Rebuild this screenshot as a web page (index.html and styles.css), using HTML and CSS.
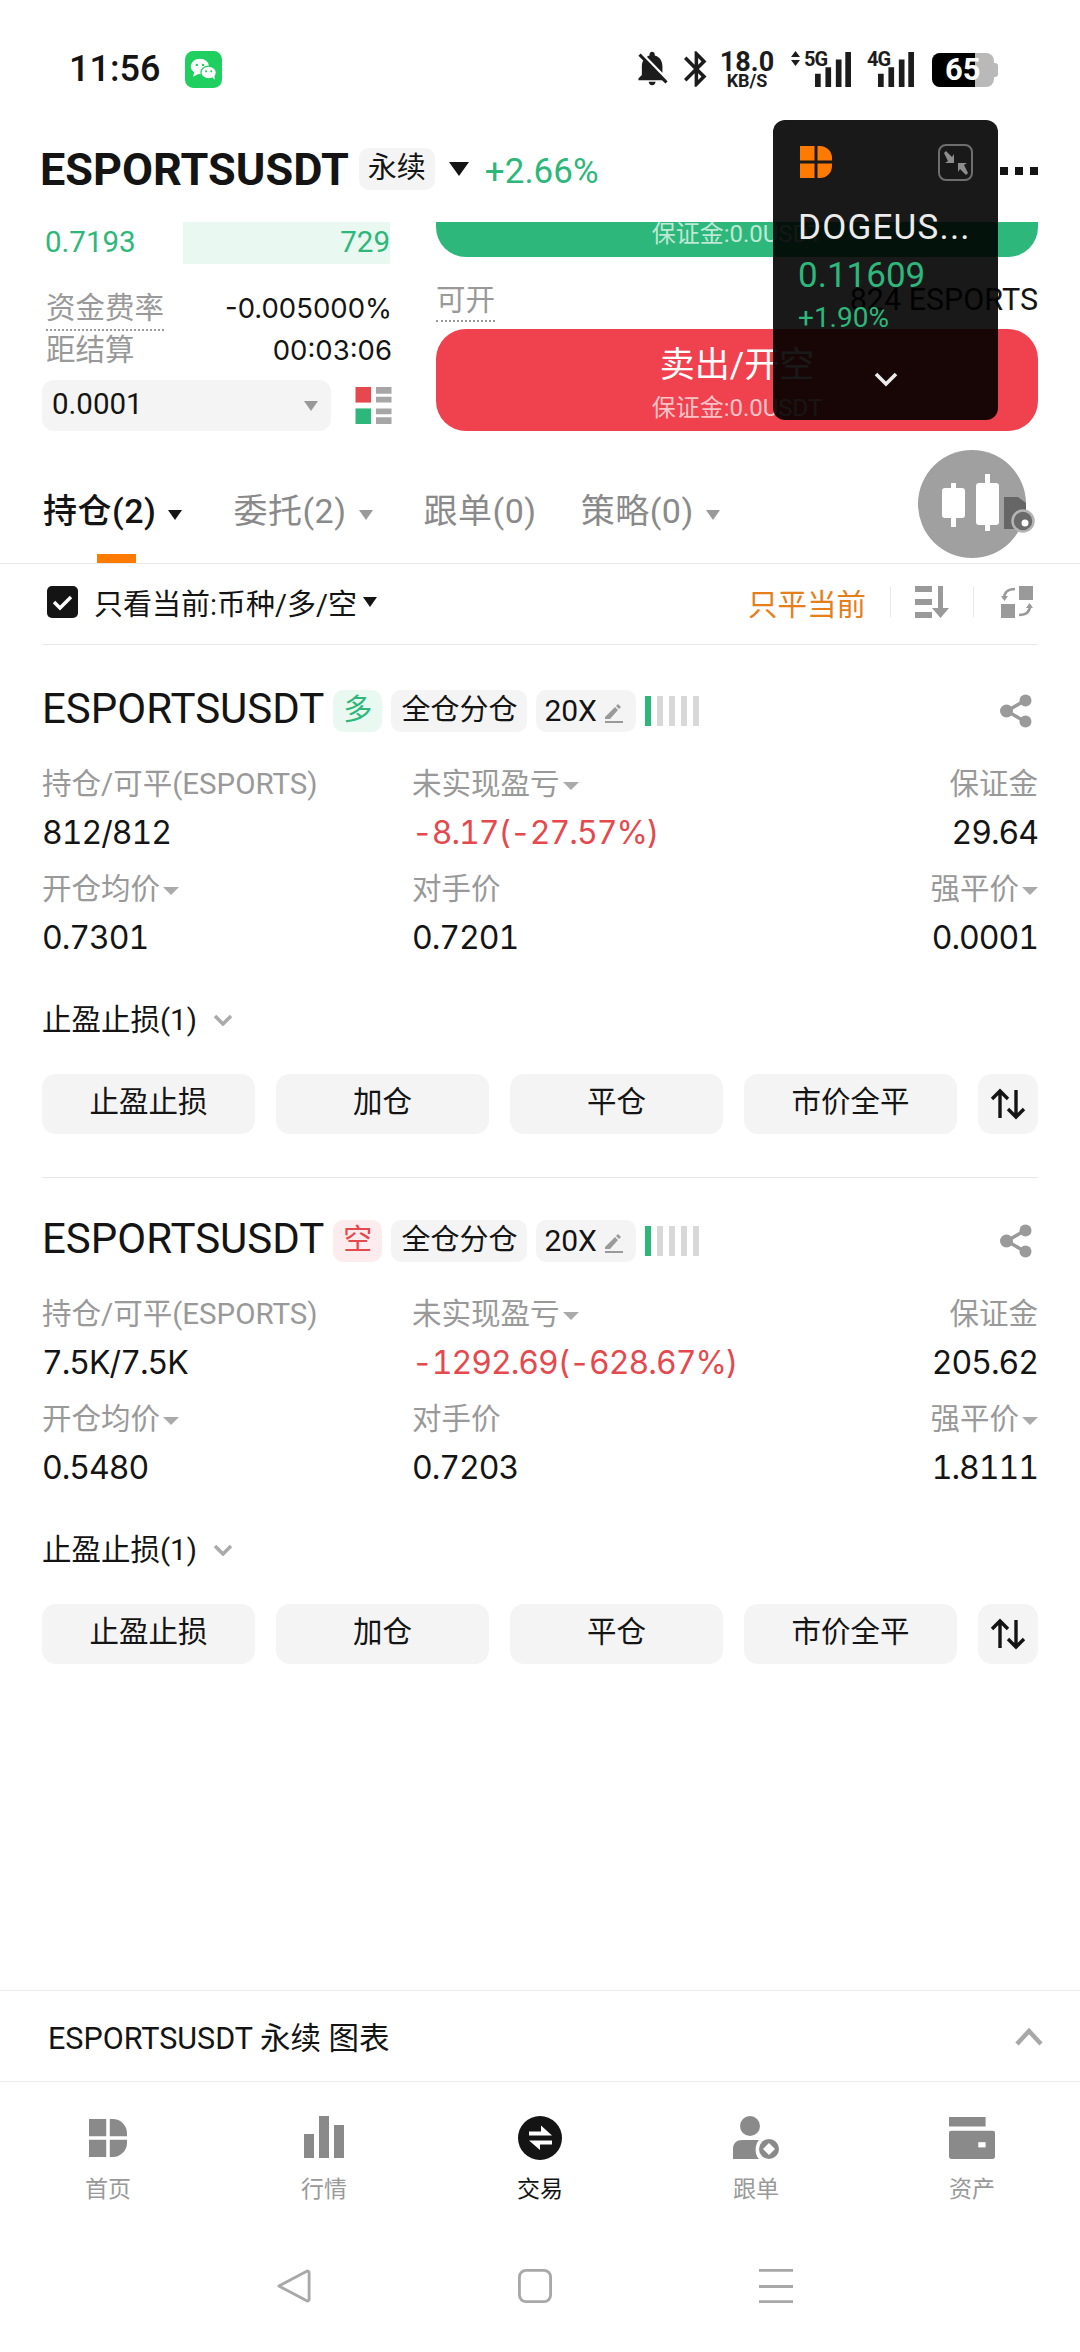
FILE: index.html
```html
<!DOCTYPE html>
<html lang="zh-CN">
<head>
    <meta charset="UTF-8">
    <meta name="viewport" content="width=device-width, initial-scale=1.0">
    <title>ESPORTSUSDT 永续</title>
    <link rel="stylesheet" href="styles.css">
</head>
<body>
    <svg class="defs" width="0" height="0">
        <symbol id="logo" viewBox="0 0 32 32">
            <path d="M0 0h14.500v14.500H0zM0 17.500h14.500V32H0zM17.500 0H20a12 12 0 0 1 12 12v2.500H17.500zM17.500 17.500H32V20a12 12 0 0 1-12 12h-2.500z"/>
        </symbol>
        <symbol id="pencil" viewBox="0 0 20 20">
            <path d="M1 13 11 3l3 3-8 9H1zM12 2l2-2 3 3-2 2zM1 17h18v2H1z"/>
        </symbol>
        <symbol id="share" viewBox="0 0 32 34">
            <path d="M24 7 7 17l17 10" fill="none" stroke="currentColor" stroke-width="3.500"/>
            <circle cx="25.500" cy="6.500" r="6"/>
            <circle cx="6.500" cy="17" r="6.500"/>
            <circle cx="25.500" cy="27.500" r="6"/>
        </symbol>
        <symbol id="updown" viewBox="0 0 36 32">
            <path d="M10 30V3M2 11l8-8 8 8M26 2v27M18 21l8 8 8-8" fill="none" stroke="currentColor" stroke-width="3.400"/>
        </symbol>
    </svg>

    <div class="page">
        <div class="status-bar">
            <span class="clock">11:56</span>
            <svg class="wechat" viewBox="0 0 36 36">
                <rect width="36" height="36" rx="8" fill="#1fcf5f"/>
                <ellipse cx="14.500" cy="15" rx="9" ry="7.500" fill="#fff"/>
                <path d="M9 20l-1 5 6-3z" fill="#fff"/>
                <ellipse cx="23" cy="21" rx="7.500" ry="6.200" fill="#fff" stroke="#1fcf5f" stroke-width="1.200"/>
                <path d="M26 25l3 3-.5-5z" fill="#fff"/>
                <circle cx="11.500" cy="13.500" r="1.200" fill="#1fcf5f"/>
                <circle cx="17.500" cy="13.500" r="1.200" fill="#1fcf5f"/>
                <circle cx="20.500" cy="19.800" r="1" fill="#1fcf5f"/>
                <circle cx="25.500" cy="19.800" r="1" fill="#1fcf5f"/>
            </svg>
            <div class="status-right">
                <svg class="st-bell" viewBox="3 2 19 21"><path d="M20 18.69L7.84 6.14 5.27 3.49 4 4.76l2.8 2.8v.01c-.52.99-.8 2.16-.8 3.42v5l-2 2v1h13.73l2 2L21 19.72l-1-1.03zM12 22c1.11 0 2-.89 2-2h-4c0 1.11.89 2 2 2zm6-7.32V11c0-3.08-1.64-5.64-4.5-6.32V4c0-.83-.67-1.5-1.5-1.5s-1.5.67-1.5 1.5v.68c-.15.03-.29.08-.42.12-.1.03-.2.07-.3.11h-.01c-.2.08-.4.18-.59.28-.1.05-.2.12-.3.18L18 14.68z"/></svg>
                <svg class="st-bt" viewBox="5 2 13 20"><path d="M17.71 7.71L12 2h-1v7.59L6.41 5 5 6.41 10.59 12 5 17.59 6.41 19 11 14.41V22h1l5.71-5.71-4.3-4.29 4.3-4.29zM13 5.83l1.88 1.88L13 9.59V5.83zm1.88 10.46L13 18.17v-3.76l1.88 1.88z"/></svg>
                <div class="st-speed"><span class="st-speed-num">18.0</span><span class="st-speed-unit">KB/S</span></div>
                <div class="st-signal st-signal-5g">
                    <svg class="st-arrows" viewBox="0 0 9 15"><path d="M4.500 0 9 6H0zM0 9h9l-4.500 6z"/></svg>
                    <span class="st-net">5G</span>
                    <svg class="st-bars" viewBox="0 0 38 37"><path d="M0 23h6v14H0zM11 16h6v21h-6zM22 8h6v29h-6zM32 0h6v37h-6z"/></svg>
                </div>
                <div class="st-signal st-signal-4g">
                    <span class="st-net">4G</span>
                    <svg class="st-bars" viewBox="0 0 38 37"><path d="M0 23h6v14H0zM11 16h6v21h-6zM22 8h6v29h-6zM32 0h6v37h-6z"/></svg>
                </div>
                <div class="st-battery"><span class="st-battery-fill"></span><span class="st-battery-text">65</span></div>
            </div>
        </div>

        <div class="title-bar">
            <span class="symbol">ESPORTSUSDT</span>
            <span class="perp-tag">永续</span>
            <span class="caret caret-title"></span>
            <span class="change">+2.66%</span>
            <div class="more"><i></i><i></i><i></i></div>
        </div>

        <div class="trade-panel">
            <div class="book-col">
                <div class="book-row">
                    <span class="book-price">0.7193</span>
                    <span class="book-qty">729</span>
                </div>
                <div class="info-row info-row-first">
                    <span class="dash-label">资金费率</span>
                    <span class="num">-0.005000%</span>
                </div>
                <div class="info-row">
                    <span class="muted">距结算</span>
                    <span class="num">00:03:06</span>
                </div>
                <div class="select-row">
                    <div class="tick-select"><span class="tick-value">0.0001</span><span class="caret caret-gray"></span></div>
                    <svg class="depth-icon" viewBox="0 0 37 38">
                        <path fill="#e5484d" d="M0 0h16v16H0z"/>
                        <path fill="#2db77b" d="M0 22h16v16H0z"/>
                        <path fill="#a6a6a6" d="M21 0h16v7H21zM21 10h16v6H21zM21 22h16v6H21zM21 31h16v7H21z"/>
                    </svg>
                </div>
            </div>
            <div class="order-col">
                <div class="btn-buy"><span class="margin-note">保证金:0.0USDT</span></div>
                <div class="avail-row">
                    <span class="dash-label">可开</span>
                    <span>824 ESPORTS</span>
                </div>
                <div class="btn-sell">
                    <span class="btn-sell-title">卖出/开空</span>
                    <span class="margin-note">保证金:0.0USDT</span>
                </div>
            </div>
        </div>

        <div class="tabs">
            <div class="tab tab-active">持仓(2)<span class="caret caret-tab"></span></div>
            <div class="tab">委托(2)<span class="caret caret-tab caret-gray"></span></div>
            <div class="tab">跟单(0)</div>
            <div class="tab tab-last">策略(0)<span class="caret caret-tab caret-gray"></span></div>
        </div>

        <div class="filter-row">
            <svg class="checkbox" viewBox="0 0 31 32">
                <rect width="31" height="32" rx="5" fill="#141414"/>
                <path d="M7 16l6 6 11-11" fill="none" stroke="#fff" stroke-width="3.400"/>
            </svg>
            <span class="filter-text">只看当前:币种/多/空</span>
            <span class="caret caret-tab"></span>
            <span class="close-current">只平当前</span>
            <span class="vsep"></span>
            <svg class="filter-icon" viewBox="0 0 34 32">
                <path d="M0 0h17v6H0zM0 13h17v6H0zM0 26h17v6H0zM23 0h5v22h6l-8.500 10L17 22h6z"/>
            </svg>
            <span class="vsep"></span>
            <svg class="filter-icon filter-icon-last" viewBox="0 0 32 32">
                <path d="M18 0h14v14H18zM0 18h14v14H0z"/>
                <path d="M14 3C7 3 3 6 3 13M18 29c7 0 11-3 11-10" fill="none" stroke="currentColor" stroke-width="2.600"/>
                <path d="M0 10h7l-3.500 5zM25 22h7l-3.500-5z"/>
            </svg>
        </div>

        <div class="positions">
            <div class="position position-split">
                <div class="pos-head">
                    <span class="pos-symbol">ESPORTSUSDT</span>
                    <span class="pos-tag tag-long">多</span>
                    <span class="pos-tag">全仓分仓</span>
                    <span class="pos-tag pos-tag-lev">20X<svg class="pencil"><use href="#pencil"/></svg></span>
                    <span class="risk"><i class="risk-on"></i><i></i><i></i><i></i><i></i></span>
                    <svg class="share"><use href="#share"/></svg>
                </div>
                <div class="pos-grid">
                    <div class="stat">
                        <span class="stat-label">持仓/可平(ESPORTS)</span>
                        <span class="stat-value">812/812</span>
                    </div>
                    <div class="stat">
                        <span class="stat-label">未实现盈亏<span class="caret caret-small"></span></span>
                        <span class="stat-value red">-8.17(-27.57%)</span>
                    </div>
                    <div class="stat stat-right">
                        <span class="stat-label">保证金</span>
                        <span class="stat-value">29.64</span>
                    </div>
                    <div class="stat">
                        <span class="stat-label">开仓均价<span class="caret caret-small"></span></span>
                        <span class="stat-value">0.7301</span>
                    </div>
                    <div class="stat">
                        <span class="stat-label">对手价</span>
                        <span class="stat-value">0.7201</span>
                    </div>
                    <div class="stat stat-right">
                        <span class="stat-label">强平价<span class="caret caret-small"></span></span>
                        <span class="stat-value">0.0001</span>
                    </div>
                </div>
                <div class="stop-row">止盈止损(1)<svg class="stop-chevron" viewBox="0 0 20 12"><path d="M2 2l8 8 8-8" fill="none" stroke="currentColor" stroke-width="3.500"/></svg></div>
                <div class="pos-actions">
                    <span class="action">止盈止损</span>
                    <span class="action">加仓</span>
                    <span class="action">平仓</span>
                    <span class="action">市价全平</span>
                    <span class="action action-icon"><svg class="updown"><use href="#updown"/></svg></span>
                </div>
            </div>

            <div class="position">
                <div class="pos-head">
                    <span class="pos-symbol">ESPORTSUSDT</span>
                    <span class="pos-tag tag-short">空</span>
                    <span class="pos-tag">全仓分仓</span>
                    <span class="pos-tag pos-tag-lev">20X<svg class="pencil"><use href="#pencil"/></svg></span>
                    <span class="risk"><i class="risk-on"></i><i></i><i></i><i></i><i></i></span>
                    <svg class="share"><use href="#share"/></svg>
                </div>
                <div class="pos-grid">
                    <div class="stat">
                        <span class="stat-label">持仓/可平(ESPORTS)</span>
                        <span class="stat-value">7.5K/7.5K</span>
                    </div>
                    <div class="stat">
                        <span class="stat-label">未实现盈亏<span class="caret caret-small"></span></span>
                        <span class="stat-value red">-1292.69(-628.67%)</span>
                    </div>
                    <div class="stat stat-right">
                        <span class="stat-label">保证金</span>
                        <span class="stat-value">205.62</span>
                    </div>
                    <div class="stat">
                        <span class="stat-label">开仓均价<span class="caret caret-small"></span></span>
                        <span class="stat-value">0.5480</span>
                    </div>
                    <div class="stat">
                        <span class="stat-label">对手价</span>
                        <span class="stat-value">0.7203</span>
                    </div>
                    <div class="stat stat-right">
                        <span class="stat-label">强平价<span class="caret caret-small"></span></span>
                        <span class="stat-value">1.8111</span>
                    </div>
                </div>
                <div class="stop-row">止盈止损(1)<svg class="stop-chevron" viewBox="0 0 20 12"><path d="M2 2l8 8 8-8" fill="none" stroke="currentColor" stroke-width="3.500"/></svg></div>
                <div class="pos-actions">
                    <span class="action">止盈止损</span>
                    <span class="action">加仓</span>
                    <span class="action">平仓</span>
                    <span class="action">市价全平</span>
                    <span class="action action-icon"><svg class="updown"><use href="#updown"/></svg></span>
                </div>
            </div>
        </div>

        <div class="chart-bar">
            <span>ESPORTSUSDT 永续 图表</span>
            <svg class="chart-chevron" viewBox="0 0 28 19"><path d="M2 17 14 4l12 13" fill="none" stroke="currentColor" stroke-width="4.500"/></svg>
        </div>

        <nav class="bottom-nav">
            <div class="nav-item">
                <svg class="nav-icon nav-logo"><use href="#logo"/></svg>
                <span>首页</span>
            </div>
            <div class="nav-item">
                <svg class="nav-icon" viewBox="0 0 44 44"><path d="M2 18h10v24H2zM17 0h10v42H17zM32 9h10v33H32z"/></svg>
                <span>行情</span>
            </div>
            <div class="nav-item nav-active">
                <svg class="nav-icon" viewBox="0 0 44 44">
                    <circle cx="22" cy="22" r="22"/>
                    <path d="M11 15.500h12V9.500L34 19.500H11zM11 24.500h23v4H22V34z" fill="#fff"/>
                </svg>
                <span>交易</span>
            </div>
            <div class="nav-item">
                <svg class="nav-icon" viewBox="0 0 46 44">
                    <circle cx="17" cy="10" r="10"/>
                    <path d="M0 43V33c0-6 4-9 9-9h17c-4 4-5 14 0 19z"/>
                    <circle cx="36" cy="33" r="10"/>
                    <path d="M36 27l6 6-6 6-6-6z" fill="#fff"/>
                </svg>
                <span>跟单</span>
            </div>
            <div class="nav-item">
                <svg class="nav-icon" viewBox="0 0 44 40">
                    <path d="M0 0h35v9H0z"/>
                    <path d="M2 13h40a2 2 0 0 1 2 2v23a2 2 0 0 1-2 2H2a2 2 0 0 1-2-2V15a2 2 0 0 1 2-2z"/>
                    <path d="M28 24h7v5h-7z" fill="#fff"/>
                </svg>
                <span>资产</span>
            </div>
        </nav>

        <div class="gesture-bar">
            <svg class="gesture" viewBox="0 0 36 36"><path d="M2 18 32 2c1 0 2 1 2 2v28c0 1-1 2-2 2z" fill="none" stroke="currentColor" stroke-width="3" stroke-linejoin="round"/></svg>
            <svg class="gesture" viewBox="0 0 36 36"><rect x="1.500" y="1.500" width="33" height="33" rx="7" fill="none" stroke="currentColor" stroke-width="3"/></svg>
            <svg class="gesture" viewBox="0 0 36 36"><path d="M0 0h36v3H0zM0 17h36v3H0zM0 33h36v3H0z"/></svg>
        </div>

        <!-- floating widgets over the page -->
        <div class="float-ticker">
            <div class="float-top">
                <svg class="float-logo"><use href="#logo"/></svg>
                <span class="float-collapse">
                    <svg viewBox="0 0 24 24" width="24" height="24">
                        <path d="M0 2l2-2 6 6 2-3v9H1l3-2zM24 22l-2 2-6-6-2 3v-9h9l-3 2z" fill="#8d8d8d"/>
                    </svg>
                </span>
            </div>
            <div class="float-name">DOGEUS...</div>
            <div class="float-price">0.11609</div>
            <div class="float-change">+1.90%</div>
            <svg class="float-chevron" viewBox="0 0 24 15"><path d="M2 2l10 10L22 2" fill="none" stroke="currentColor" stroke-width="3.600"/></svg>
        </div>

        <div class="float-chart">
            <svg viewBox="0 0 108 108" width="108" height="108">
                <circle cx="54" cy="54" r="54" fill="#a0a0a0"/>
                <path fill="#fff" d="M33 33h5v5h6a3 3 0 0 1 3 3v24a3 3 0 0 1-3 3h-6v9h-5v-9h-6a3 3 0 0 1-3-3V41a3 3 0 0 1 3-3h6z"/>
                <path fill="#fff" d="M67 24h5v9h6a3 3 0 0 1 3 3v36a3 3 0 0 1-3 3h-6v6h-5v-6h-6a3 3 0 0 1-3-3V36a3 3 0 0 1 3-3h6z"/>
                <path fill="#666" d="M86 47h14l8 6v26H86z"/>
            </svg>
            <svg class="float-chart-badge" viewBox="0 0 24 24">
                <circle cx="12" cy="12" r="10.500" fill="#6a6a6a" stroke="#b4b4b4" stroke-width="2.500"/>
                <circle cx="14" cy="14" r="3.500" fill="#fff"/>
            </svg>
        </div>
    </div>
</body>
</html>
```

FILE: styles.css
```css
* {
    box-sizing: border-box;
}
body {
    margin: 0;
    background: #fff;
    color: #141414;
    font-family: Roboto, "Noto Sans CJK SC", sans-serif;
}
.defs {
    position: absolute;
}
.page {
    position: relative;
    width: 1080px;
    height: 2352px;
    display: flex;
    flex-direction: column;
    overflow: hidden;
}
.num {
    font-family: Inter, "Noto Sans CJK SC", sans-serif;
}

/* status bar */
.status-bar {
    height: 116px;
    padding: 50px 86px 0 69px;
    display: flex;
    align-items: flex-start;
}
.clock {
    font-size: 36px;
    font-weight: 500;
    line-height: 38px;
    width: 116px;
}
.wechat {
    width: 37px;
    height: 37px;
    margin-top: 1px;
}
.status-right {
    margin-left: auto;
    padding-top: 1px;
    display: flex;
    align-items: flex-start;
    color: #1c1c1c;
    fill: #1c1c1c;
}
.st-bell {
    width: 36px;
    height: 36px;
}
.st-bt {
    width: 23px;
    height: 36px;
    margin-left: 13px;
}
.st-speed {
    width: 56px;
    margin-left: 12px;
    display: flex;
    flex-direction: column;
    align-items: center;
    font-weight: 700;
}
.st-speed-num {
    font-size: 27px;
    line-height: 22px;
}
.st-speed-unit {
    font-size: 18px;
    line-height: 15px;
}
.st-signal {
    position: relative;
    height: 36px;
}
.st-signal-5g {
    width: 61px;
    margin-left: 16px;
}
.st-signal-4g {
    width: 48px;
    margin-left: 15px;
}
.st-arrows {
    position: absolute;
    left: 0;
    top: 0;
    width: 9px;
    height: 15px;
}
.st-net {
    position: absolute;
    top: -2px;
    font-size: 20px;
    line-height: 20px;
    font-weight: 700;
    letter-spacing: -1px;
}
.st-signal-5g .st-net {
    left: 13px;
}
.st-signal-4g .st-net {
    left: 0;
}
.st-bars {
    position: absolute;
    right: 0;
    bottom: 0;
    width: 38px;
    height: 35px;
}
.st-battery {
    position: relative;
    width: 62px;
    height: 34px;
    margin: 2px 0 0 17px;
    border-radius: 8px;
    background: #b9b9b9;
}
.st-battery::after {
    content: '';
    position: absolute;
    right: -4px;
    top: 10px;
    width: 4px;
    height: 14px;
    border-radius: 0 3px 3px 0;
    background: #b9b9b9;
}
.st-battery-fill {
    position: absolute;
    left: 0;
    top: 0;
    width: 43px;
    height: 34px;
    background: #000;
    border-radius: 8px 0 0 8px;
}
.st-battery-text {
    position: absolute;
    left: 13px;
    top: 0;
    color: #fff;
    font-size: 31px;
    line-height: 34px;
    font-weight: 700;
}

/* title */
.title-bar {
    height: 106px;
    padding: 0 42px 0 40px;
    display: flex;
    align-items: center;
}
.symbol {
    font-size: 45px;
    font-weight: 700;
}
.perp-tag {
    margin-left: 10px;
    width: 76px;
    height: 42px;
    border-radius: 10px;
    background: #f4f4f4;
    font-size: 29px;
    line-height: 40px;
    text-align: center;
}
.caret {
    display: inline-block;
    width: 0;
    height: 0;
    border-style: solid;
    border-color: #141414 transparent transparent;
}
.caret-title {
    margin: 0 16px 0 14px;
    border-width: 14px 10px 0;
}
.change {
    margin-top: 4px;
    font-size: 35px;
    color: #2db77b;
}
.more {
    margin: 4px 0 0 auto;
    display: flex;
    gap: 7px;
}
.more i {
    width: 8px;
    height: 8px;
    background: #141414;
}

/* order panel */
.trade-panel {
    padding: 0 42px;
    height: 209px;
    display: flex;
    justify-content: space-between;
    font-size: 29.500px;
}
.book-col {
    width: 350px;
}
.book-row {
    height: 42px;
    margin-right: 2px;
    display: flex;
    color: #2db77b;
    font-size: 29.500px;
    line-height: 40px;
}
.book-price {
    width: 141px;
    padding-left: 3px;
}
.book-qty {
    flex: 1;
    height: 42px;
    text-align: right;
    background: #e9f8f1;
}
.info-row {
    height: 36px;
    margin-top: 6px;
    display: flex;
    justify-content: space-between;
    line-height: 36px;
    padding-left: 4px;
}
.info-row .num {
    font-size: 27.500px;
}
.info-row-first {
    margin-top: 26px;
}
.dash-label {
    height: 41px;
    color: #999;
    border-bottom: 2px dotted #999;
}
.muted {
    color: #999;
}
.select-row {
    margin-top: 12px;
    display: flex;
    justify-content: space-between;
    align-items: center;
}
.tick-select {
    width: 289px;
    height: 51px;
    padding: 0 13px 0 10px;
    border-radius: 12px;
    background: #f4f4f4;
    display: flex;
    justify-content: space-between;
    align-items: center;
}
.tick-value {
    margin-bottom: 3px;
}
.caret-gray {
    border-top-color: #999;
}
.tick-select .caret {
    border-width: 10px 7px 0;
}
.depth-icon {
    width: 37px;
    height: 37px;
}
.order-col {
    width: 602px;
}
.btn-buy {
    height: 35px;
    border-radius: 0 0 30px 30px;
    background: #2db77b;
    text-align: center;
    overflow: hidden;
}
.margin-note {
    display: block;
    font-size: 24px;
    line-height: 24px;
    color: rgba(255, 255, 255, 0.7);
}
.avail-row {
    height: 47px;
    margin-top: 25px;
    display: flex;
    justify-content: space-between;
    line-height: 36px;
    font-size: 30.500px;
}
.avail-row .dash-label {
    height: 40px;
    font-size: 29.500px;
}
.btn-sell {
    height: 102px;
    padding-top: 15px;
    border-radius: 30px;
    background: #f0424e;
    text-align: center;
    color: #fff;
}
.btn-sell-title {
    display: block;
    font-size: 35px;
    line-height: 44px;
}
.btn-sell .margin-note {
    margin-top: 8px;
}

/* tabs */
.tabs {
    height: 133px;
    padding: 57px 0 0 43px;
    display: flex;
    gap: 51px;
    border-bottom: 1px solid #e8e8e8;
    font-size: 34px;
    letter-spacing: 0.5px;
    line-height: 46px;
    color: #8a8a8a;
}
.tab {
    position: relative;
    height: 75px;
    white-space: nowrap;
}
.tab-active {
    color: #141414;
    font-weight: 500;
}
.tab-active::after {
    content: '';
    position: absolute;
    left: 54px;
    bottom: 0;
    width: 39px;
    height: 9px;
    background: #ff7a00;
}
.tab-last {
    margin-left: -7px;
}
.caret-tab {
    margin-left: 12px;
    border-width: 10px 7px 0;
    vertical-align: 3px;
}

/* filter row */
.filter-row {
    height: 81px;
    margin: 0 42px;
    padding: 0 5px 4px;
    display: flex;
    align-items: center;
    border-bottom: 1px solid #e8e8e8;
    font-size: 29.500px;
}
.checkbox {
    width: 31px;
    height: 32px;
}
.filter-text {
    margin-left: 16px;
    font-size: 29px;
}
.filter-row .caret-tab {
    margin-left: 6px;
    vertical-align: 0;
}
.close-current {
    margin-left: auto;
    color: #e67e1a;
}
.vsep {
    width: 1px;
    height: 30px;
    margin: 0 24px;
    background: #e8e8e8;
}
.filter-icon {
    width: 34px;
    height: 32px;
    fill: #9a9a9a;
    color: #9a9a9a;
}
.filter-icon-last {
    width: 32px;
    margin-left: 3px;
}

/* positions */
.positions {
    flex: 1;
    padding: 0 42px;
}
.position {
    padding-top: 42px;
}
.position-split {
    height: 533px;
    padding-top: 45px;
    border-bottom: 1px solid #e8e8e8;
}
.pos-head {
    height: 42px;
    display: flex;
    align-items: center;
    font-size: 29px;
}
.pos-symbol {
    margin-bottom: 6px;
    font-size: 42px;
}
.pos-tag {
    margin-left: 9px;
    height: 42px;
    padding: 0 10px;
    border-radius: 10px;
    background: #f4f4f4;
    line-height: 40px;
    white-space: nowrap;
}
.tag-long {
    background: #e9f8f1;
    color: #2db77b;
}
.tag-short {
    background: #fdeced;
    color: #e5484d;
}
.pos-tag-lev {
    padding: 0 12px 0 8px;
    display: flex;
    align-items: center;
    font-size: 30px;
}
.pencil {
    width: 20px;
    height: 20px;
    margin: 5px 0 0 7px;
    fill: #9a9a9a;
}
.risk {
    margin-left: 9px;
    display: flex;
    gap: 6px;
}
.risk i {
    width: 6px;
    height: 30px;
    background: #d8d8d8;
}
.risk .risk-on {
    background: #2db77b;
}
.share {
    margin-left: auto;
    margin-right: 6px;
    width: 32px;
    height: 34px;
    fill: #9a9a9a;
    color: #9a9a9a;
}
.pos-grid {
    margin-top: 30px;
    display: grid;
    grid-template-columns: 370px 1fr auto;
    row-gap: 7px;
}
.stat {
    display: flex;
    flex-direction: column;
}
.stat-right {
    align-items: flex-end;
}
.stat-label {
    height: 44px;
    line-height: 44px;
    font-size: 29.500px;
    color: #999;
}
.stat-value {
    height: 54px;
    line-height: 54px;
    font-family: Inter, "Noto Sans CJK SC", sans-serif;
    font-variant-numeric: tabular-nums;
    font-size: 32px;
    letter-spacing: -1px;
}
.red {
    color: #e5484d;
}
.caret-small {
    margin-left: 3px;
    border-width: 8px 8px 0;
    border-top-color: #aaa;
    vertical-align: 4px;
}
.stop-row {
    height: 40px;
    margin-top: 35px;
    font-size: 29.500px;
    line-height: 40px;
    display: flex;
    align-items: center;
}
.stop-chevron {
    margin-left: 16px;
    width: 20px;
    height: 12px;
    color: #aaa;
}
.pos-actions {
    margin-top: 34px;
    display: flex;
    gap: 21px;
}
.action {
    width: 213px;
    height: 60px;
    border-radius: 14px;
    background: #f4f4f4;
    font-size: 29.500px;
    line-height: 56px;
    text-align: center;
}
.action-icon {
    width: 60px;
    display: flex;
    align-items: center;
    justify-content: center;
}
.updown {
    width: 36px;
    height: 32px;
}

/* bottom */
.chart-bar {
    height: 92px;
    padding: 0 37px 0 48px;
    display: flex;
    justify-content: space-between;
    align-items: center;
    border-top: 1px solid #ededed;
    border-bottom: 1px solid #ededed;
    font-size: 30.500px;
}
.chart-chevron {
    width: 28px;
    height: 19px;
    color: #a8a8a8;
}
.bottom-nav {
    padding-top: 34px;
    display: grid;
    grid-template-columns: repeat(5, 216px);
}
.nav-item {
    display: flex;
    flex-direction: column;
    align-items: center;
    gap: 15px;
    font-size: 23px;
    line-height: 30px;
    color: #999;
}
.nav-icon {
    width: 46px;
    height: 44px;
    fill: #8a8a8a;
}
.nav-logo {
    width: 38px;
    height: 38px;
    margin: 3px 0;
}
.nav-active {
    color: #141414;
}
.nav-active .nav-icon {
    fill: #141414;
}
.gesture-bar {
    margin-top: 64px;
    height: 83px;
    padding: 0 286px 0 276px;
    display: flex;
    justify-content: space-between;
}
.gesture {
    width: 36px;
    height: 34px;
    color: #a8a8a8;
    fill: #a8a8a8;
}

/* floating widgets */
.float-ticker {
    position: absolute;
    left: 773px;
    top: 120px;
    width: 225px;
    height: 300px;
    padding: 24px 25px 0;
    border-radius: 12px;
    background: rgba(0, 0, 0, 0.9);
    color: #ececec;
}
.float-top {
    display: flex;
    justify-content: space-between;
    align-items: flex-start;
}
.float-logo {
    width: 32px;
    height: 32px;
    margin: 2px 0 0 2px;
    fill: #ff7a00;
}
.float-collapse {
    width: 35px;
    height: 37px;
    border: 2px solid #6e6e6e;
    border-radius: 8px;
    display: flex;
    align-items: center;
    justify-content: center;
}
.float-name {
    margin-top: 25px;
    font-size: 35px;
    letter-spacing: 1.2px;
    line-height: 44px;
    white-space: nowrap;
}
.float-price {
    margin-top: 4px;
    font-size: 35px;
    line-height: 44px;
    color: #2db77b;
}
.float-change {
    font-size: 28px;
    line-height: 36px;
    margin-top: 2px;
    color: #2db77b;
}
.float-chevron {
    display: block;
    width: 24px;
    height: 15px;
    margin: 36px auto 0;
}
.float-chart {
    position: absolute;
    left: 918px;
    top: 450px;
    width: 108px;
    height: 108px;
}
.float-chart-badge {
    position: absolute;
    left: 93px;
    top: 59px;
    width: 24px;
    height: 24px;
}
```
